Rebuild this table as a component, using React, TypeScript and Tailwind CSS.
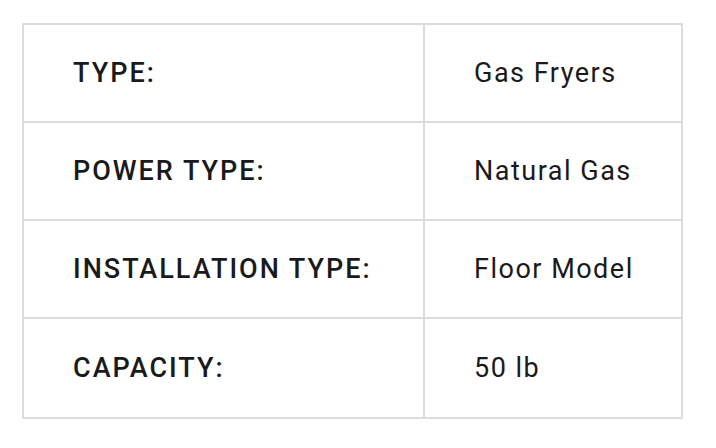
import React from "react";

const rows: [string, string][] = [
  ["TYPE:", "Gas Fryers"],
  ["POWER TYPE:", "Natural Gas"],
  ["INSTALLATION TYPE:", "Floor Model"],
  ["CAPACITY:", "50 lb"],
];

export default function App() {
  return (
    <div className="w-[716px] h-[448px] bg-white pl-[22px] pt-[23px]" style={{ fontFamily: "Roboto, 'Liberation Sans', sans-serif" }}>
      <div className="w-[661px] border-2 border-[#dcdcdc] flex flex-col">
        {rows.map(([k, v], i) => (
          <div key={k} className={`flex h-[98px] ${i < rows.length - 1 ? "border-b-2 border-[#dcdcdc]" : "h-[96px]"}`}>
            <div className="w-[401px] border-r-2 border-[#dcdcdc] flex items-center pl-[49px] text-[27px] font-medium text-[#1a1a1a] tracking-[2px]">
              {k}
            </div>
            <div className="flex-1 flex items-center pl-[49px] text-[27px] text-[#1a1a1a] tracking-[1.5px]">
              {v}
            </div>
          </div>
        ))}
      </div>
    </div>
  );
}
